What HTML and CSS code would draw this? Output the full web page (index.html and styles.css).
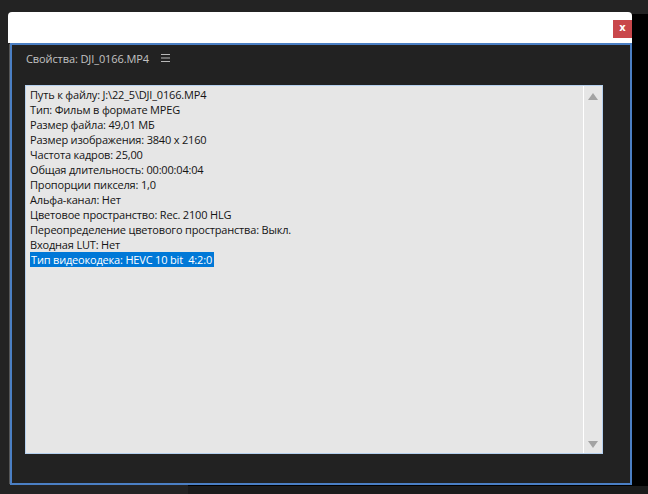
FILE: index.html
```html
<!DOCTYPE html>
<html lang="ru">
<head>
<meta charset="utf-8">
<title>Свойства</title>
<link rel="stylesheet" href="styles.css">
</head>
<body>
<div class="desk">
  <div class="window">
    <div class="titlebar">
      <div class="close">x</div>
    </div>
    <div class="panel">
      <div class="panel-head">
        <span class="panel-title">Свойства: DJI_0166.MP4</span>
        <span class="menu">
          <svg width="9" height="8" viewBox="0 0 9 8"><path d="M0 0.5H9M0 4H9M0 7.5H9" stroke="#b8b8b8" stroke-width="1"/></svg>
        </span>
      </div>
      <div class="listbox">
        <div class="lines">
          <div class="line">Путь к файлу: J:\22_5\DJI_0166.MP4</div>
          <div class="line">Тип: Фильм в формате MPEG</div>
          <div class="line">Размер файла: 49,01 МБ</div>
          <div class="line">Размер изображения: 3840 x 2160</div>
          <div class="line">Частота кадров: 25,00</div>
          <div class="line">Общая длительность: 00:00:04:04</div>
          <div class="line">Пропорции пикселя: 1,0</div>
          <div class="line">Альфа-канал: Нет</div>
          <div class="line">Цветовое пространство: Rec. 2100 HLG</div>
          <div class="line">Переопределение цветового пространства: Выкл.</div>
          <div class="line">Входная LUT: Нет</div>
          <div class="line"><span class="sel">Тип видеокодека: HEVC 10 bit&nbsp; 4:2:0</span></div>
        </div>
        <div class="scroll">
          <svg class="arrow" width="10" height="7" viewBox="0 0 10 7"><path d="M5 0L10 7H0Z" fill="#a3a3a3"/></svg>
          <svg class="arrow" width="10" height="7" viewBox="0 0 10 7"><path d="M0 0H10L5 7Z" fill="#a3a3a3"/></svg>
        </div>
      </div>
    </div>
  </div>
  <div class="behind"></div>
</div>
<div class="footer"><div class="footer-bar"></div></div>
</body>
</html>
```

FILE: styles.css
```css
html, body {
  margin: 0;
  padding: 0;
  background: #232323;
  width: 648px;
  height: 494px;
  overflow: hidden;
  font-family: "Open Sans", "Noto Sans", sans-serif;
}

.desk {
  display: flex;
  padding-top: 12px;
  height: 473px;
}

.window {
  margin-left: 8px;
  width: 624px;
  display: flex;
  flex-direction: column;
}

.behind {
  width: 16px;
  margin-top: 2px;
  background: #000;
}

.titlebar {
  height: 31px;
  background: #ffffff;
  border-radius: 4px 4px 0 0;
  display: flex;
  justify-content: flex-end;
  align-items: flex-start;
  padding-top: 8px;
  box-sizing: border-box;
}

.close {
  width: 19px;
  height: 18px;
  background: #c9474b;
  color: #fff;
  font-family: "DejaVu Sans", sans-serif;
  font-weight: bold;
  font-size: 10px;
  line-height: 16px;
  text-align: center;
}

.panel {
  flex: 1;
  margin-left: 2px;
  border: 2px solid #4b7fc4;
  box-shadow: -2px 0 0 -1px #555;
  background: #222222;
  display: flex;
  flex-direction: column;
}

.panel-head {
  height: 26px;
  padding: 0 0 0 14px;
  display: flex;
  align-items: center;
  gap: 12px;
}

.panel-title {
  color: #c2c2c2;
  font-size: 11px;
  letter-spacing: -0.1px;
}

.menu {
  display: flex;
  align-items: center;
}

.listbox {
  margin: 14px 27px 29px 13px;
  flex: 1;
  background: #e6e6e6;
  border: 1px solid #b5d0ee;
  display: flex;
}

.lines {
  flex: 1;
  padding: 1px 0 0 4px;
}

.line {
  font-size: 11px;
  line-height: 15px;
  height: 15px;
  color: #141414;
  white-space: nowrap;
  letter-spacing: -0.18px;
}

.sel {
  display: inline-block;
  background: #0078d7;
  color: #ffffff;
  padding: 0 2px 0 1px;
}

.scroll {
  width: 18px;
  border-left: 1px solid #ffffff;
  display: flex;
  flex-direction: column;
  justify-content: space-between;
  align-items: center;
  padding: 7px 0 5px;
}

.footer {
  display: flex;
  justify-content: flex-end;
}

.footer-bar {
  width: 460px;
  height: 9px;
  background: #1b1b1b;
  border-top: 1px solid #000;
}
```
